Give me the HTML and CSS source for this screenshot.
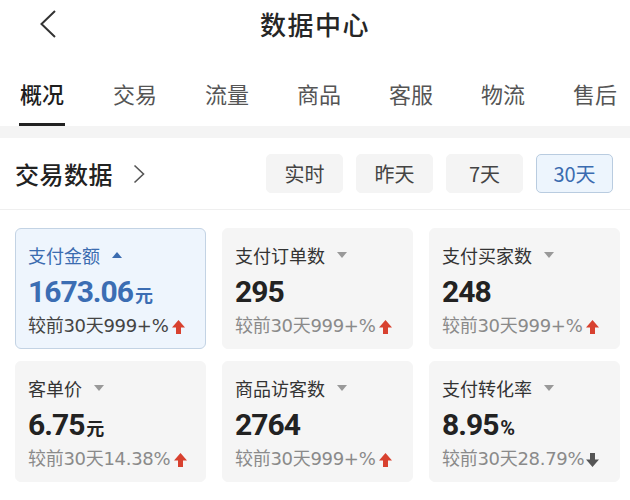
FILE: index.html
```html
<!DOCTYPE html>
<html lang="zh">
<head>
<meta charset="utf-8">
<title>数据中心</title>
<link rel="stylesheet" href="styles.css">
</head>
<body>
<header class="topbar">
  <div class="back">
    <svg width="16" height="28" viewBox="0 0 16 28"><polyline points="15,1 1.5,14 15,27" fill="none" stroke="#333" stroke-width="2"/></svg>
  </div>
  <h1 class="title">数据中心</h1>
  <div></div>
</header>
<nav class="tabs">
  <span class="tab active">概况</span>
  <span class="tab">交易</span>
  <span class="tab">流量</span>
  <span class="tab">商品</span>
  <span class="tab">客服</span>
  <span class="tab">物流</span>
  <span class="tab">售后</span>
</nav>
<div class="band"></div>
<section class="section-head">
  <div class="sec-title">交易数据
    <svg class="sec-chev" width="12" height="20" viewBox="0 0 12 20"><polyline points="1.5,1.5 10.5,10 1.5,18.5" fill="none" stroke="#555" stroke-width="1.6"/></svg>
  </div>
  <div class="ranges">
    <span class="range">实时</span>
    <span class="range">昨天</span>
    <span class="range">7天</span>
    <span class="range active">30天</span>
  </div>
</section>
<main class="grid">
  <div class="card active">
    <div class="c-title">支付金额<span class="caret up"></span></div>
    <div class="c-value">1673.06<span class="unit">元</span></div>
    <div class="c-cmp">较前30天999+%<svg class="arrow" width="13" height="14" viewBox="0 0 13 14"><polygon points="6.5,0 13,7.5 9,7.5 9,14 4,14 4,7.5 0,7.5" fill="#d8412f"/></svg></div>
  </div>
  <div class="card">
    <div class="c-title">支付订单数<span class="caret"></span></div>
    <div class="c-value">295</div>
    <div class="c-cmp">较前30天999+%<svg class="arrow" width="13" height="14" viewBox="0 0 13 14"><polygon points="6.5,0 13,7.5 9,7.5 9,14 4,14 4,7.5 0,7.5" fill="#d8412f"/></svg></div>
  </div>
  <div class="card">
    <div class="c-title">支付买家数<span class="caret"></span></div>
    <div class="c-value">248</div>
    <div class="c-cmp">较前30天999+%<svg class="arrow" width="13" height="14" viewBox="0 0 13 14"><polygon points="6.5,0 13,7.5 9,7.5 9,14 4,14 4,7.5 0,7.5" fill="#d8412f"/></svg></div>
  </div>
  <div class="card">
    <div class="c-title">客单价<span class="caret"></span></div>
    <div class="c-value">6.75<span class="unit">元</span></div>
    <div class="c-cmp">较前30天14.38%<svg class="arrow" width="13" height="14" viewBox="0 0 13 14"><polygon points="6.5,0 13,7.5 9,7.5 9,14 4,14 4,7.5 0,7.5" fill="#d8412f"/></svg></div>
  </div>
  <div class="card">
    <div class="c-title">商品访客数<span class="caret"></span></div>
    <div class="c-value">2764</div>
    <div class="c-cmp">较前30天999+%<svg class="arrow" width="13" height="14" viewBox="0 0 13 14"><polygon points="6.5,0 13,7.5 9,7.5 9,14 4,14 4,7.5 0,7.5" fill="#d8412f"/></svg></div>
  </div>
  <div class="card">
    <div class="c-title">支付转化率<span class="caret"></span></div>
    <div class="c-value">8.95<span class="unit pct">%</span></div>
    <div class="c-cmp">较前30天28.79%<svg class="arrow down" width="13" height="14" viewBox="0 0 13 14"><polygon points="6.5,14 13,6.5 9,6.5 9,0 4,0 4,6.5 0,6.5" fill="#555"/></svg></div>
  </div>
</main>
</body>
</html>
```

FILE: styles.css
```css
* { box-sizing: border-box; }
html, body { margin: 0; padding: 0; background: #fff; }
body {
  width: 630px;
  height: 500px;
  overflow: hidden;
  font-family: "Noto Sans CJK SC", "Noto Sans", sans-serif;
  color: #222;
}
.topbar {
  display: grid;
  grid-template-columns: 1fr auto 1fr;
  align-items: center;
  height: 48px;
}
.back { padding-left: 40px; display: flex; align-items: center; height: 48px; }
.back svg { display: block; margin-top: -1px; }
.title {
  margin: 0;
  font-size: 26px;
  font-weight: 500;
  line-height: 48px;
  color: #262626;
  letter-spacing: 1.5px;
}
.tabs {
  display: flex;
  gap: 48px;
  padding: 30px 0 0 20px;
  height: 78px;
}
.tab {
  font-size: 22px;
  line-height: 30px;
  height: 48px;
  padding-bottom: 15px;
  color: #555;
  white-space: nowrap;
}
.tab.active {
  color: #1e1e1e;
  font-weight: 500;
  border-bottom: 3px solid #222;
  margin-left: -1px;
  padding: 0 1px 15px;
}
.band { height: 12px; background: #f4f4f4; }
.section-head {
  display: flex;
  align-items: center;
  justify-content: space-between;
  height: 72px;
  padding: 0 17px 0 15px;
  border-bottom: 1px solid #efefef;
}
.sec-title {
  display: flex;
  align-items: center;
  font-size: 24px;
  font-weight: 500;
  color: #222;
  letter-spacing: 0.5px;
}
.sec-chev { margin-left: 20px; margin-top: 1px; }
.ranges { display: flex; gap: 13px; }
.range {
  width: 77px;
  height: 39px;
  border-radius: 5px;
  background: #f4f4f4;
  font-size: 20px;
  color: #444;
  display: flex;
  align-items: center;
  justify-content: center;
  border: 1px solid #f4f4f4;
}
.range.active {
  background: #edf5fd;
  border-color: #b9cce0;
  color: #3b6cb0;
}
.grid {
  display: grid;
  grid-template-columns: repeat(3, 1fr);
  column-gap: 16px;
  row-gap: 12px;
  padding: 18px 10px 0 15px;
}
.card {
  height: 121px;
  background: #f5f5f5;
  border-radius: 6px;
  padding: 13px 12px 0 12px;
  border: 1px solid #f5f5f5;
}
.card.active {
  background: #eef5fd;
  border-color: #c3d3e4;
}
.c-title {
  display: flex;
  align-items: center;
  font-size: 18px;
  line-height: 26px;
  color: #333;
}
.card.active .c-title { color: #3b6cb0; }
.caret {
  width: 0; height: 0;
  margin-left: 12px;
  border-left: 5px solid transparent;
  border-right: 5px solid transparent;
  border-top: 6px solid #999;
}
.caret.up {
  border-top: 0;
  border-bottom: 6px solid #3b6cb0;
}
.c-value {
  margin-top: 7px;
  font-family: Roboto, "Liberation Sans", sans-serif;
  font-weight: 700;
  font-size: 30px;
  line-height: 34px;
  height: 34px;
  color: #222;
  letter-spacing: -1px;
}
.card.active .c-value { color: #3b6db3; }
.unit {
  font-family: "Noto Sans CJK SC", sans-serif;
  font-size: 18px;
  font-weight: 700;
  margin-left: 2px;
  letter-spacing: 0;
}
.unit.pct { font-family: Roboto, sans-serif; font-size: 20px; }
.c-cmp {
  margin-top: 5px;
  display: flex;
  align-items: center;
  font-family: "DejaVu Sans", "Noto Sans CJK SC", sans-serif;
  font-size: 18px;
  line-height: 24px;
  color: #8a8a8a;
  white-space: nowrap;
  letter-spacing: -0.3px;
}
.card.active .c-cmp { color: #444; }
.arrow { margin-left: 4px; margin-top: 1px; flex-shrink: 0; }
.arrow.down { margin-left: 2px; }
```
